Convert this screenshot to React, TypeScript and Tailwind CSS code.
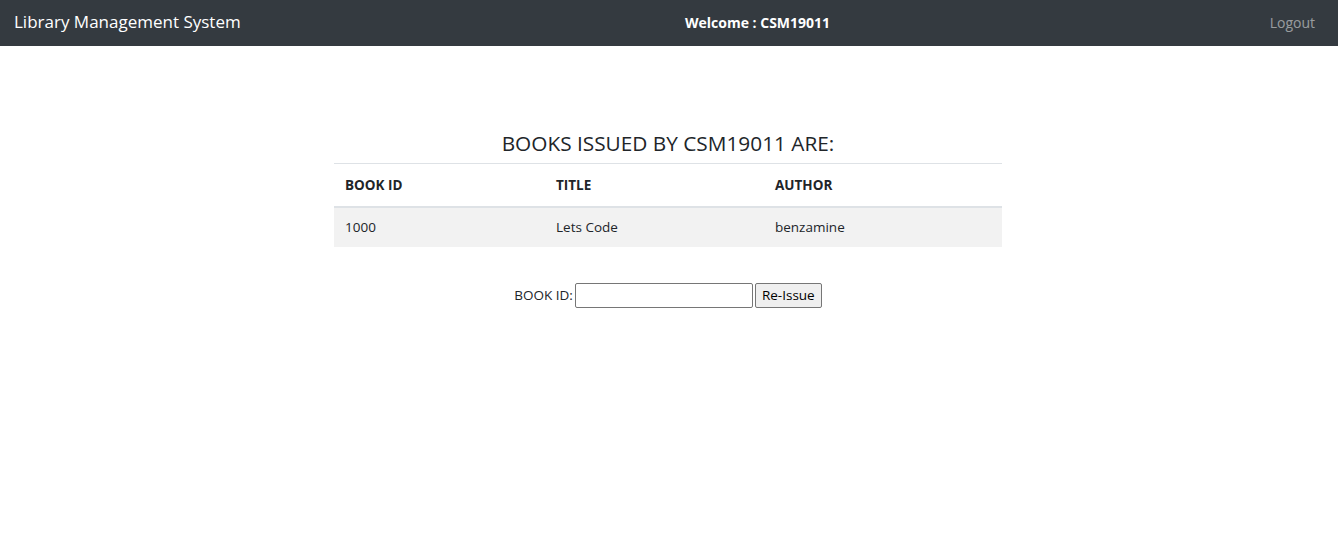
const books = [{ id: "1000", title: "Lets Code", author: "benzamine" }];

export default function App() {
  return (
    <div className="min-h-[558px] bg-white font-['Open_Sans',sans-serif] text-[#212529]">
      <nav className="flex h-[46px] items-center bg-[#343a40] px-[14px] pb-[2px]">
        <div className="w-[671px] text-[17px] text-white">Library Management System</div>
        <div className="text-[14px] font-bold text-white">Welcome : CSM19011</div>
        <div className="flex flex-1 justify-end pr-[9px] text-[14px] text-white/50">Logout</div>
      </nav>

      <div className="ml-[334px] mt-[82px] w-[668px]">
        <h2 className="mb-[5px] text-center text-[20.8px] leading-[30px]">BOOKS ISSUED BY CSM19011 ARE:</h2>
        <table className="w-full border-collapse text-[13.5px]">
          <thead>
            <tr className="border-t border-[#dee2e6]">
              <th className="h-[43px] w-[211px] border-b-2 border-[#dee2e6] px-[11px] text-left font-bold">BOOK ID</th>
              <th className="h-[43px] w-[219px] border-b-2 border-[#dee2e6] px-[11px] text-left font-bold">TITLE</th>
              <th className="h-[43px] border-b-2 border-[#dee2e6] px-[11px] text-left font-bold">AUTHOR</th>
            </tr>
          </thead>
          <tbody>
            {books.map((b) => (
              <tr key={b.id} className="bg-[#f2f2f2]">
                <td className="h-[40px] px-[11px]">{b.id}</td>
                <td className="h-[40px] px-[11px]">{b.title}</td>
                <td className="h-[40px] px-[11px]">{b.author}</td>
              </tr>
            ))}
          </tbody>
        </table>

        <form className="mt-[36px] flex items-center justify-center text-[13.5px]">
          <label className="mr-[2px]">BOOK ID:</label>
          <input className="h-[25px] w-[178px] rounded-[2px] border border-[#767676] px-1" />
          <button type="button" className="ml-[2px] h-[25px] rounded-[2px] border border-[#767676] bg-[#efefef] px-[6px] text-[13.5px] text-black">
            Re-Issue
          </button>
        </form>
      </div>
    </div>
  );
}
